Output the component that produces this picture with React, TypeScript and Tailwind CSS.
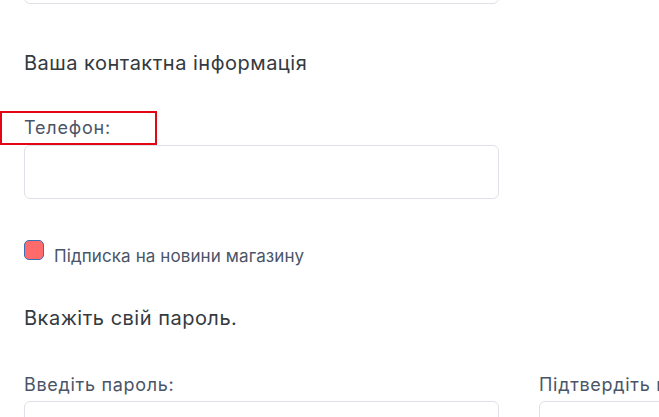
export default function App() {
  return (
    <div className="min-h-screen w-[659px] overflow-hidden bg-white font-['Inter','Noto_Sans',sans-serif]">
      <div className="pl-6">
        {/* previous field, cut off at the top */}
        <div className="-mt-[50px] h-[54px] w-[475px] rounded-md border border-[#dee2e6] bg-white" />

        <h3 className="mt-[46px] text-[20px] leading-[27px] tracking-[0.5px] text-[#343a40]">
          Ваша контактна інформація
        </h3>

        <div className="relative mt-[39px] w-[475px]">
          <div className="pointer-events-none absolute -left-6 -top-[5px] h-[34px] w-[157px] border-2 border-[#e30613]" />
          <label className="block text-[18px] leading-6 tracking-[0.8px] text-[#4a5568]">Телефон:</label>
        </div>
        <input
          type="text"
          className="mt-[5px] block h-[54px] w-[475px] rounded-md border border-[#dee2e6] bg-white px-3 outline-none"
        />

        <div className="mt-[41px] flex items-start">
          <span className="h-5 w-5 shrink-0 rounded-[5px] border border-[#3d6fb8] bg-[#ff6b6b]" />
          <span className="ml-[10px] mt-[6px] text-[17px] leading-5 tracking-[0.1px] text-[#4a5568]">
            Підписка на новини магазину
          </span>
        </div>

        <h3 className="mt-[39px] text-[20px] leading-[27px] tracking-[0.5px] text-[#343a40]">
          Вкажіть свій пароль.
        </h3>

        <div className="mt-[41px] grid grid-cols-[475px_475px] gap-x-10">
          <div>
            <label className="block whitespace-nowrap text-[18px] leading-6 tracking-[0.7px] text-[#4a5568]">
              Введіть пароль:
            </label>
            <input
              type="password"
              className="mt-1 block h-[54px] w-full rounded-md border border-[#dee2e6] bg-white px-3 outline-none"
            />
          </div>
          <div>
            <label className="block whitespace-nowrap text-[18px] leading-6 tracking-[0.7px] text-[#4a5568]">
              Підтвердіть пароль:
            </label>
            <input
              type="password"
              className="mt-1 block h-[54px] w-full rounded-md border border-[#dee2e6] bg-white px-3 outline-none"
            />
          </div>
        </div>
      </div>
    </div>
  );
}
